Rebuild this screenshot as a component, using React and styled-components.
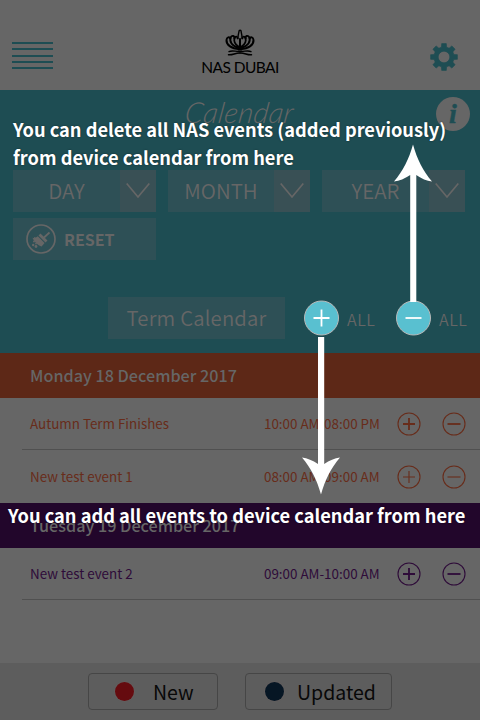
import React from 'react';
import styled, { createGlobalStyle } from 'styled-components';

const TEAL = '#1e4d53';
const GREY = '#666666';
const RUST = '#5d2817';
const PLUM = '#22062b';
const SANS = '"Noto Sans CJK SC", "Open Sans", sans-serif';

const Global = createGlobalStyle`
  * { box-sizing: border-box; }
  body { margin: 0; background: ${GREY}; font-family: ${SANS}; }
  svg { display: block; flex: none; overflow: visible; }
`;

const Screen = styled.main`
  position: relative;
  display: flex;
  flex-direction: column;
  width: 480px;
  height: 720px;
  overflow: hidden;
  background: ${GREY};
`;

const Header = styled.header`
  display: grid;
  grid-template-columns: 1fr 80px 1fr;
  height: 90px;
  padding: 29px 22px 0 12px;
`;

const MenuIcon = styled.div`
  display: flex;
  flex-direction: column;
  justify-content: space-between;
  width: 41px;
  height: 27px;
  margin-top: 13px;
`;

const MenuLine = styled.span`
  height: 2px;
  background: ${TEAL};
`;

const Brand = styled.div`
  display: flex;
  flex-direction: column;
  align-items: center;
  margin: 0 -5px 0 5px;
`;

const BrandName = styled.div`
  font: 400 15.5px/18px Lato, sans-serif;
  margin-top: 1px;
  color: #000;
  white-space: nowrap;
  letter-spacing: -0.55px;
`;

const GearSlot = styled.div`
  justify-self: end;
  padding-top: 14px;
`;

const Panel = styled.section`
  display: flex;
  flex-direction: column;
  height: 263px;
  padding: 6px 0 14px 13px;
  background: ${TEAL};
  color: ${GREY};
`;

const TitleRow = styled.div`
  display: grid;
  grid-template-columns: 1fr auto;
  height: 74px;
`;

const Title = styled.h1`
  margin: 0 0 0 170px;
  font: italic 300 29px/32px Lato, sans-serif;
  letter-spacing: 0.3px;
  transform: skewX(-8deg);
  transform-origin: 0 100%;
  height: 32px;
`;

const InfoBadge = styled.div`
  display: flex;
  align-items: center;
  justify-content: center;
  width: 34px;
  height: 34px;
  margin: 1px 10px 0 0;
  border-radius: 50%;
  background: ${GREY};
  color: ${TEAL};
  font: italic 700 28px/34px "Liberation Serif", serif;
  -webkit-text-stroke: 0.5px ${TEAL};
`;

const Filters = styled.div`
  display: grid;
  grid-template-columns: 143px 142px 143px;
  gap: 6px 12px;
`;

const Select = styled.div`
  display: grid;
  grid-template-columns: 1fr 36px;
  height: 42px;
  background: #2e5056;
  font-size: 20.5px;
  font-weight: 350;
  line-height: 40px;
  text-align: center;
`;

const SelectArrow = styled.div`
  display: flex;
  align-items: center;
  justify-content: center;
  background: #395055;
`;

const Reset = styled.div`
  display: flex;
  align-items: center;
  gap: 8px;
  height: 42px;
  padding-left: 13px;
  background: #2e5056;
  font-size: 16px;
  font-weight: 700;
  line-height: 40px;
`;

const TermRow = styled.div`
  display: flex;
  align-items: center;
  margin-top: auto;
  padding-left: 95px;
  height: 42px;
`;

const TermButton = styled.div`
  flex: none;
  width: 177px;
  height: 42px;
  margin-right: 19px;
  background: #2e5056;
  font-size: 20.3px;
  font-weight: 350;
  letter-spacing: 0.2px;
  line-height: 40px;
  text-align: center;
`;

const AllLabel = styled.span`
  flex: none;
  width: 49px;
  margin-left: 8px;
  font-size: 16px;
  font-weight: 350;
  letter-spacing: 0.5px;
  line-height: 42px;
  padding-top: 2px;
`;

const DateBar = styled.h2`
  flex: none;
  height: 45px;
  margin: 0;
  padding-left: 30px;
  background: ${p => p.$color};
  color: ${GREY};
  font-size: 16.2px;
  font-weight: 500;
  line-height: 44px;
`;

const EventRow = styled.div`
  display: flex;
  flex: none;
  align-items: center;
  height: ${p => p.$height}px;
  margin-left: 22px;
  padding: 0 14px 0 8px;
  border-bottom: ${p => (p.$line ? '1px solid #505050' : '0')};
  color: ${p => p.$color};
  font-size: 13.4px;
  line-height: 20px;
  white-space: nowrap;
`;

const EventName = styled.span`
  flex: 1;
  padding-bottom: 1px;
`;

const EventTime = styled.span`
  width: 116px;
  margin-right: 17px;
  padding-bottom: 1px;
`;

const RowActions = styled.div`
  display: flex;
  gap: 21px;
`;

const Footer = styled.footer`
  display: flex;
  justify-content: center;
  gap: 27px;
  height: 57px;
  margin-top: auto;
  padding-top: 10px;
  background: #5d5d5d;
`;

const LegendButton = styled.div`
  display: flex;
  align-items: center;
  width: ${p => p.$width}px;
  height: 37px;
  padding-left: ${p => p.$pad}px;
  gap: ${p => p.$gap}px;
  border: 1px solid #464646;
  border-radius: 4px;
  color: #080808;
  font-size: 19.5px;
  line-height: 35px;
`;

const Dot = styled.span`
  width: 19px;
  height: 19px;
  border-radius: 50%;
  background: ${p => p.$color};
  box-shadow: 0 0 0 1px #68606088;
`;

const Coach = styled.div`
  position: absolute;
  inset: 0;
`;

const Note = styled.p`
  position: absolute;
  left: ${p => p.$left}px;
  top: ${p => p.$top}px;
  margin: 0;
  color: #fff;
  font-size: 18.24px;
  font-weight: 700;
  line-height: 28px;
  white-space: nowrap;
  background: ${p => (p.$backing ? `linear-gradient(transparent 2px, ${p.$backing} 2px 19px, transparent 19px)` : 'none')};
  text-shadow: 0 0 2px rgba(0, 0, 0, 0.45);
`;

const Arrows = styled.svg`
  position: absolute;
  inset: 0;
`;

const gearPath = () => {
  const pts = [];
  for (let i = 0; i < 8; i++) {
    const base = (i * Math.PI) / 4;
    [[-0.26, 10.2], [-0.17, 13.6], [0.17, 13.6], [0.26, 10.2]].forEach(([a, r]) => {
      pts.push(`${(14 + r * Math.sin(base + a)).toFixed(2)},${(14 - r * Math.cos(base + a)).toFixed(2)}`);
    });
  }
  return `M${pts.join('L')}ZM14 8.2a5.8 5.8 0 1 0 0 11.6a5.8 5.8 0 1 0 0-11.6Z`;
};

const Gear = () => (
  <svg width="28" height="28" viewBox="0 0 28 28">
    <path d={gearPath()} fill={TEAL} fillRule="evenodd" stroke={TEAL} strokeWidth="0.6" strokeLinejoin="round" />
  </svg>
);

const petals = (
  <g>
    <path d="M14.500 20C6 19.800 1.200 15.500 1.500 11C1.800 8 4.500 7.500 5.200 9.500" strokeWidth="2" />
    <path d="M13.500 18.800C7 17 4 12.500 5.800 8.200C7 6 10 6.800 9.200 9.300" strokeWidth="1.900" />
    <path d="M13.500 17.500C9.800 15.500 8.200 11.500 10 8.500C11 7 12.800 7.500 12.500 9.500" strokeWidth="1.700" />
    <path d="M4 22.600C7.500 20.800 11 23 15 22.400" strokeWidth="1.400" />
    <path d="M3.500 25.800C8 26.300 10 23.800 15 24" strokeWidth="1.500" />
  </g>
);

const Crest = () => (
  <svg width="30" height="28" viewBox="0 0 30 28">
    <g fill="none" stroke="#000" strokeLinecap="round">
      {petals}
      <g transform="translate(30 0) scale(-1 1)">{petals}</g>
      <path d="M13 9.500C12.800 6 13.800 4.500 13.900 2.800C14 .8 16.200 .8 16.200 2.800C16.300 5 17.300 6 17 9.500" strokeWidth="1.400" />
      <path d="M15 10v9" strokeWidth="2" />
    </g>
    <path d="M11 17h8l-2 4.500h-4Z" />
  </svg>
);

const Chevron = () => (
  <svg width="24" height="16" viewBox="0 0 24 16">
    <path d="M.7.500L12 14L23.300.500" fill="none" stroke={GREY} strokeWidth="1.700" />
  </svg>
);

const Broom = () => (
  <svg width="30" height="30" viewBox="0 0 30 30">
    <circle cx="15" cy="15" r="14" fill="none" stroke={GREY} strokeWidth="1.700" />
    <path d="M23.500 8.500l-5.500 5" stroke={GREY} strokeWidth="1.800" />
    <path d="M14.500 9.500l7 7l-2 2l-7-7ZM11.800 12.200l6.800 6.800l-3 3.600c-3.500-1-8-5.300-9.100-8.800l1.700.5l-.3-1.200l2 .4Z" fill={GREY} />
    <g fill={GREY}><circle cx="8" cy="17.500" r="1" /><circle cx="7.200" cy="21" r="1.200" /><circle cx="10" cy="19.500" r=".9" /><circle cx="10" cy="22.500" r="1.400" /></g>
  </svg>
);

const RoundAction = ({ color, plus, thin }) => (
  <svg width="24" height="24" viewBox="0 0 24 24" fill="none" stroke={color}>
    <circle cx="12" cy="12" r="11" strokeWidth="1.100" />
    <path d={plus ? 'M6 12h12M12 6v12' : 'M5.500 12h13'} strokeWidth={thin ? 1.100 : 1.800} />
  </svg>
);

const BigAction = ({ plus }) => (
  <svg width="35" height="36" viewBox="0 0 35 36">
    <circle cx="17.500" cy="18" r="17" fill="#59c0d0" stroke="#b9b9b9" />
    <path d={plus ? 'M9.500 18h16M17.500 9.500v17' : 'M9.500 18h16'} stroke="#fff" strokeWidth="1.800" />
  </svg>
);

const Event = ({ name, time, color, height, line, thin }) => (
  <EventRow $color={color} $height={height} $line={line}>
    <EventName>{name}</EventName>
    <EventTime>{time}</EventTime>
    <RowActions>
      <RoundAction plus color={color} thin={thin} />
      <RoundAction color={color} thin={thin} />
    </RowActions>
  </EventRow>
);

export default function App() {
  return (
    <Screen>
      <Global />
      <Header>
        <MenuIcon>{[0, 1, 2, 3, 4].map(i => <MenuLine key={i} />)}</MenuIcon>
        <Brand>
          <Crest />
          <BrandName>NAS DUBAI</BrandName>
        </Brand>
        <GearSlot><Gear /></GearSlot>
      </Header>
      <Panel>
        <TitleRow>
          <Title>Calendar</Title>
          <InfoBadge>i</InfoBadge>
        </TitleRow>
        <Filters>
          {['DAY', 'MONTH', 'YEAR'].map(label => (
            <Select key={label}>
              {label}
              <SelectArrow><Chevron /></SelectArrow>
            </Select>
          ))}
          <Reset><Broom />RESET</Reset>
        </Filters>
        <TermRow>
          <TermButton>Term Calendar</TermButton>
          <BigAction plus />
          <AllLabel>ALL</AllLabel>
          <BigAction />
          <AllLabel>ALL</AllLabel>
        </TermRow>
      </Panel>
      <DateBar $color={RUST}>Monday 18 December 2017</DateBar>
      <Event name="Autumn Term Finishes" time="10:00 AM-08:00 PM" color="#682c1a" height={52} line />
      <Event name="New test event 1" time="08:00 AM-09:00 AM" color="#682c1a" height={53} thin />
      <DateBar $color={PLUM}>Tuesday 19 December 2017</DateBar>
      <Event name="New test event 2" time="09:00 AM-10:00 AM" color="#2e0b39" height={52} line />
      <Footer>
        <LegendButton $width={130} $pad={26} $gap={19}><Dot $color="#650b0f" />New</LegendButton>
        <LegendButton $width={147} $pad={19} $gap={13}><Dot $color="#061624" />Updated</LegendButton>
      </Footer>
      <Coach>
        <Note $left={13} $top={115}>
          You can delete all NAS events (added previously)<br />from device calendar from here
        </Note>
        <Note $left={8} $top={501} $backing={PLUM}>You can add all events to device calendar from here</Note>
        <Arrows width="480" height="720" viewBox="0 0 480 720" fill="#fff">
          <path d="M413 144.500C417 159 423 171 432 181.500Q424 180.500 416.300 175V302H410.200V175Q402 180.500 394 181.500C403 171 409 159 413 144.500Z" />
          <path d="M321 494.500C317 480 311 468 302 457.500Q310 458.500 318 464V337H324.200V464Q332 458.500 340 457.500C331 468 325 480 321 494.500Z" />
        </Arrows>
      </Coach>
    </Screen>
  );
}
